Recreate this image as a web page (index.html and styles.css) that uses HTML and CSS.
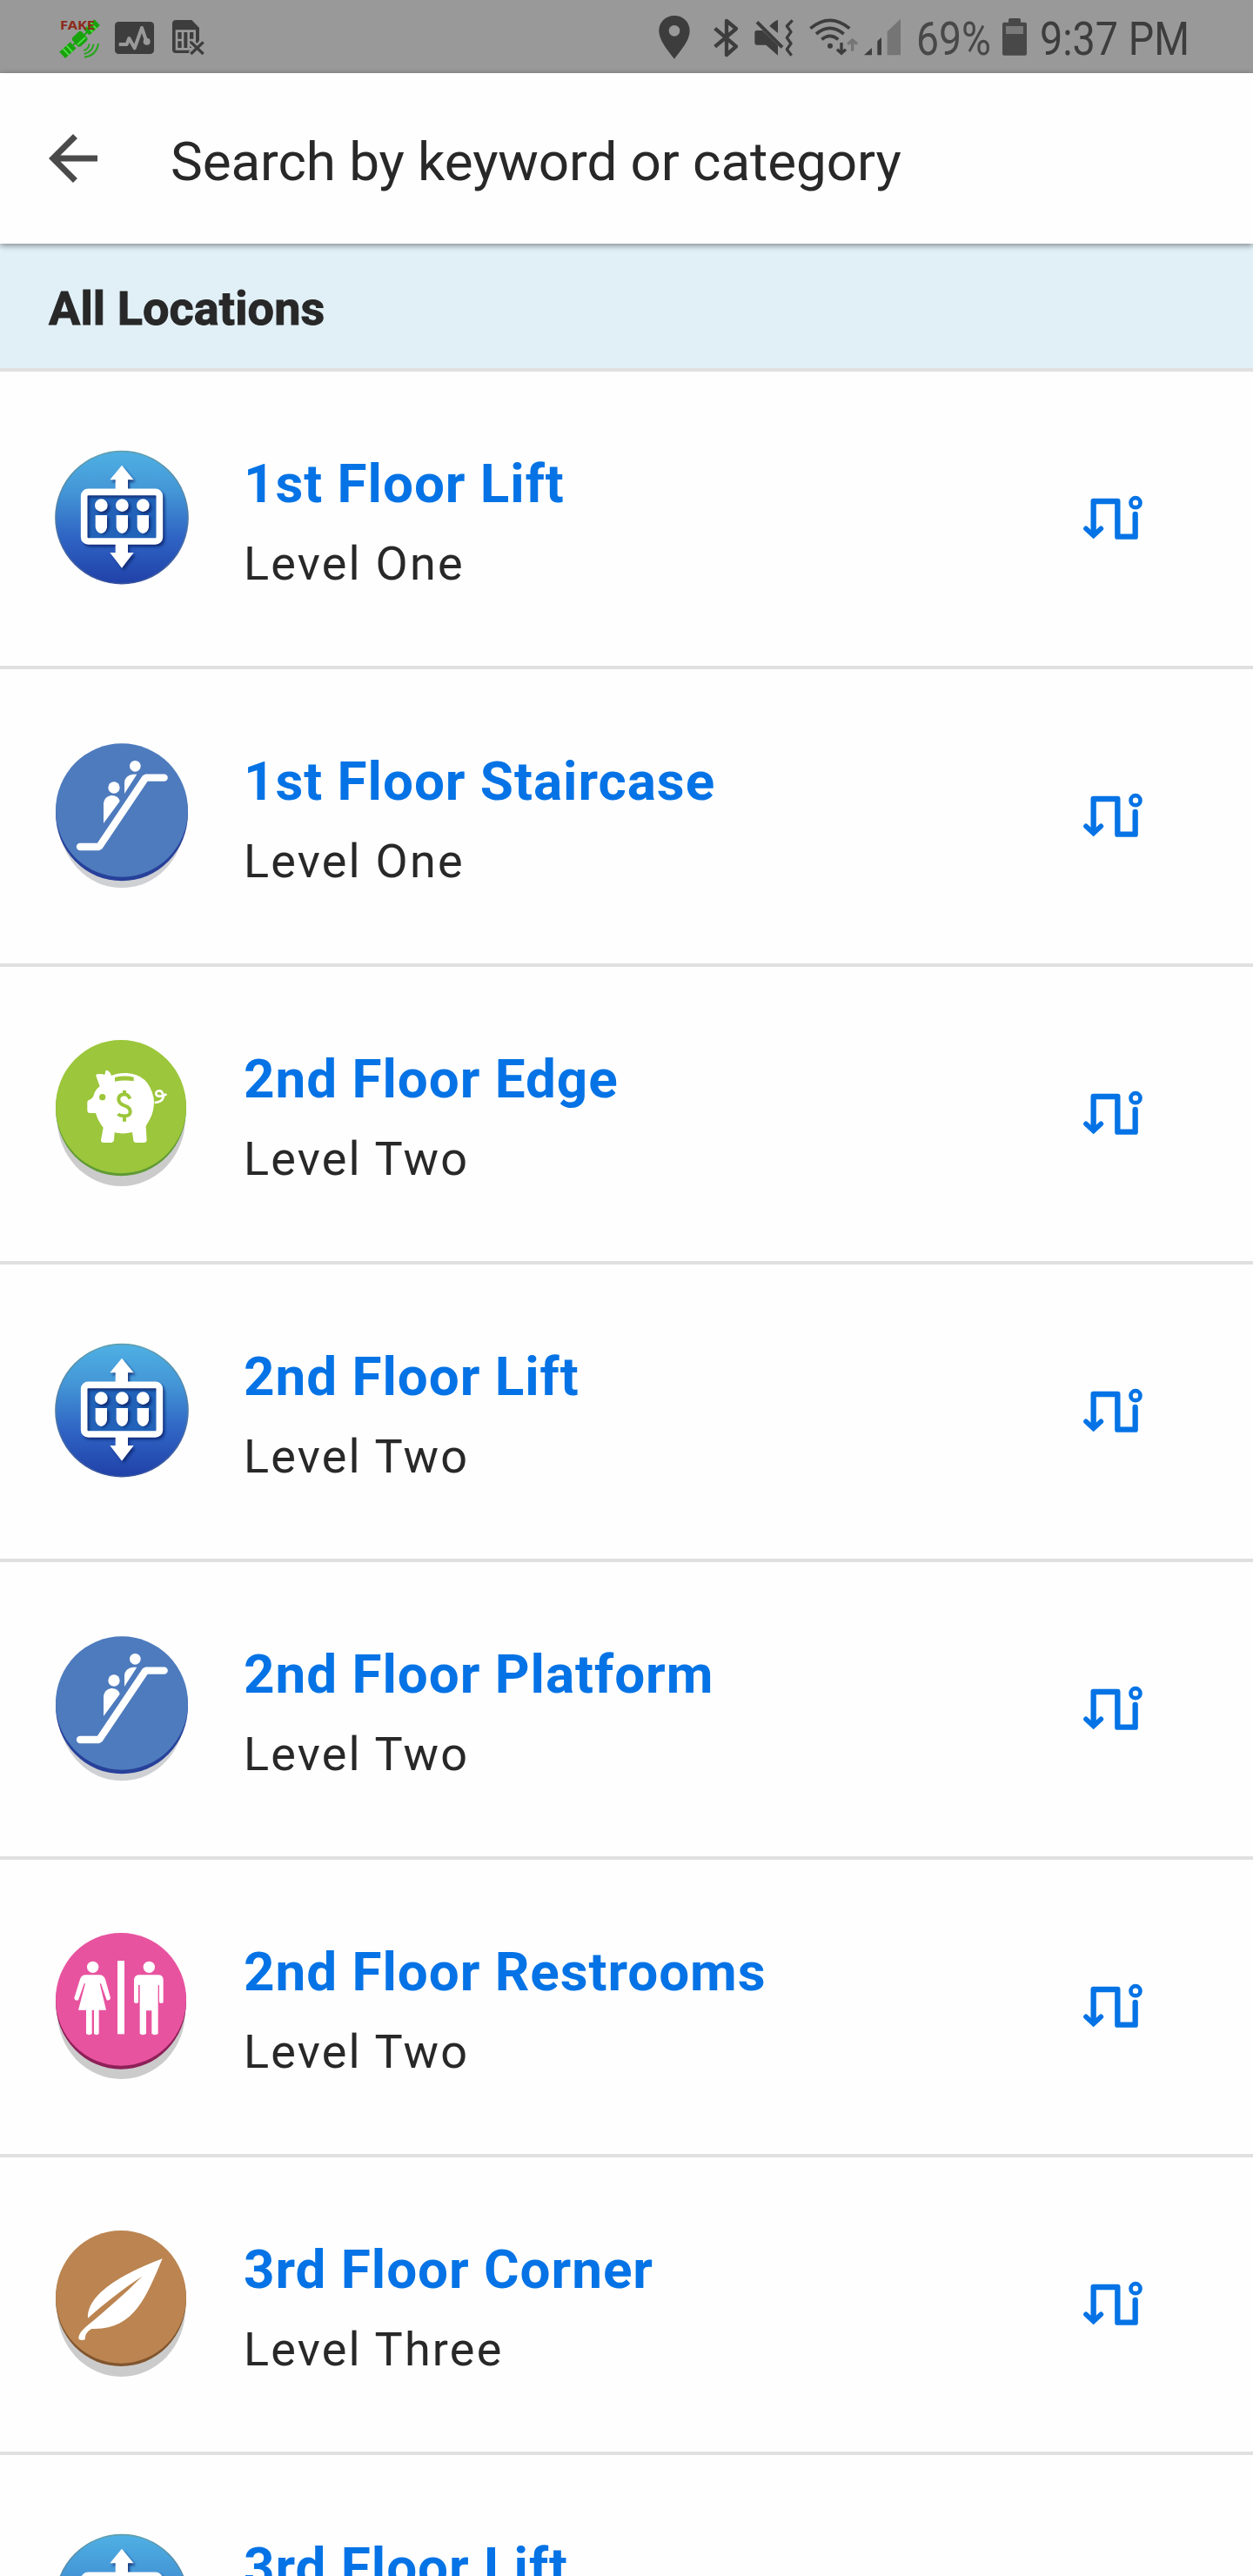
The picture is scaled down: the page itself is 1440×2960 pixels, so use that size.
FILE: index.html
```html
<!DOCTYPE html>
<html lang="en">
<head>
<meta charset="utf-8">
<title>All Locations</title>
<link rel="stylesheet" href="styles.css">
</head>
<body>
<svg class="defs" width="0" height="0" aria-hidden="true">
  <defs>
    <linearGradient id="liftFill" x1="0" y1="0" x2="0" y2="1">
      <stop offset="0" stop-color="#4fb0e4"/>
      <stop offset=".3" stop-color="#4496d6"/>
      <stop offset=".65" stop-color="#2f64c4"/>
      <stop offset="1" stop-color="#2041a8"/>
    </linearGradient>
    <linearGradient id="liftRim" x1="0" y1="0" x2="0" y2="1">
      <stop offset="0" stop-color="#5f9fae"/>
      <stop offset="1" stop-color="#3a55a0"/>
    </linearGradient>
    <filter id="soft" x="-20%" y="-20%" width="140%" height="140%"><feGaussianBlur stdDeviation="4"/></filter>
  </defs>
  <symbol id="lift" viewBox="48 66 504 504">
    <circle cx="300" cy="314" r="228" fill="url(#liftFill)" stroke="url(#liftRim)" stroke-width="5"/>
    <rect x="178" y="234" width="244" height="154" fill="#2263b9"/>
    <g transform="translate(7 8)" fill="#0d2870" stroke="none" opacity=".85" filter="url(#soft)">
      <path d="M300 136l40 47h-20v35h-42v-35h-20zM278 404h42v32h20l-40 52-40-52h18z"/>
      <rect x="170" y="226" width="260" height="170" rx="14" fill="none" stroke="#0d2870" stroke-width="22"/>
      <circle cx="229" cy="272" r="23"/><circle cx="301" cy="272" r="23"/><circle cx="373" cy="272" r="23"/>
      <path d="M209 305h40v42l-20 20-20-20zM281 305h40v42l-20 20-20-20zM353 305h40v42l-20 20-20-20z"/>
    </g>
    <path d="M300 134l41 50h-20v36h-43v-36h-19zM278 402h43v33h20l-41 53-41-53h19z" fill="#fff"/>
    <rect x="170" y="226" width="260" height="170" rx="14" fill="none" stroke="#fff" stroke-width="23"/>
    <g fill="#fff">
      <circle cx="229" cy="272" r="22"/><circle cx="301" cy="272" r="22"/><circle cx="373" cy="272" r="22"/>
      <path d="M209 306h40v42q-4 18-20 21q-16-3-20-21zM281 306h40v42q-4 18-20 21q-16-3-20-21zM353 306h40v42q-4 18-20 21q-16-3-20-21z"/>
    </g>
  </symbol>
  <symbol id="stairs" viewBox="48 42 504 504">
    <ellipse cx="300" cy="308" rx="217" ry="233" fill="#cfd0d3"/>
    <ellipse cx="300" cy="284" rx="228" ry="233" fill="#27419a"/>
    <ellipse cx="300" cy="273" rx="228" ry="230" fill="#4e7bbd"/>
    <path d="M156 399h66L382 161h64" fill="none" stroke="#fff" stroke-width="25" stroke-linecap="round" stroke-linejoin="bevel"/>
    <circle cx="346" cy="121" r="19" fill="#fff"/>
    <circle cx="273" cy="195" r="20" fill="#fff"/>
    <path d="M309 216v-38q2-26 30-29h13zM237 318v-70q4-23 26-26q25-1 30 20z" fill="#fff"/>
  </symbol>
  <symbol id="piggy" viewBox="48 48 504 504">
    <ellipse cx="298" cy="315" rx="221" ry="234" fill="#cbcbcb"/>
    <ellipse cx="297" cy="282" rx="225" ry="232" fill="#5f9a35"/>
    <ellipse cx="297" cy="275" rx="225" ry="230" fill="#9cc63b"/>
    <path d="M248 149q12 4 16 19q22-10 52-9q76 3 94 86q5 48-22 88l-5 9 3 48q-1 9-9 9h-28q-8 0-9-8l-4-28q-31 8-61 1l-2 27q-2 8-9 8h-27q-9 0-9-8l8-44q-18-22-26-50h-22q-7-1-7-9v-29q0-6 7-8q10-3 15-15q4-18 21-31l-13-36q-1-5 4-6q14-3 26 2l3-12q0-4 4-4z" fill="#fff"/>
    <path d="M413 261q31-2 30-25q-4-20-19-15q-13 8 0 17q19 3 30-7" fill="none" stroke="#fff" stroke-width="8"/>
    <circle cx="233" cy="242" r="11" fill="#9cc63b"/>
    <path d="M276 174q34-8 65-1v14q-32-6-65 1z" fill="#9cc63b"/>
    <path d="M328 248q-6-16-20-16q-20 2-19 19q1 13 20 20q21 7 20 23q-1 12-18 13q-18 0-24-7M309 219v15M309 307v19" fill="none" stroke="#9cc63b" stroke-width="12"/>
  </symbol>
  <symbol id="restroom" viewBox="48 36 504 504">
    <ellipse cx="298" cy="303" rx="221" ry="234" fill="#cbcbcb"/>
    <ellipse cx="297" cy="271" rx="225" ry="232" fill="#8d2058"/>
    <ellipse cx="297" cy="262" rx="225" ry="229" fill="#e8539f"/>
    <g fill="#fff">
      <rect x="285" y="129" width="24" height="253"/>
      <circle cx="200" cy="151" r="20"/><circle cx="394" cy="151" r="20"/>
      <path d="M175 178h48q14 0 20 15l18 64q-2 10-13 8l-20-57h-4l22 91h-25v82q-8 7-17 0v-82h-7v82q-10 7-20 0v-82h-27l24-91h-4l-20 57q-12 3-14-8l20-64q5-15 19-15z"/>
      <path d="M358 178h70q15 2 15 17v77q-7 7-14 0v-59h-4v168q-11 7-22 0v-80h-19v80q-11 7-22 0V213h-5v59q-7 7-15 0v-77q1-15 16-17z"/>
    </g>
  </symbol>
  <symbol id="feather" viewBox="48 42 504 504">
    <ellipse cx="298" cy="309" rx="221" ry="234" fill="#cbcbcb"/>
    <ellipse cx="297" cy="276" rx="225" ry="231" fill="#80552e"/>
    <ellipse cx="297" cy="268" rx="225" ry="229" fill="#bb8450"/>
    <path d="M440 136C340 174 180 246 183 341C240 291 300 242 370 197C310 258 240 318 182 366C160 385 148 400 152 414Q162 419 173 415Q172 390 196 378C340 384 384 270 440 136z" fill="#fff"/>
  </symbol>
  <symbol id="route" viewBox="72 60 213 156">
    <g fill="none" stroke="#0573e5" stroke-width="19" stroke-linecap="round" stroke-linejoin="round">
      <path d="M110 192V78h83v122h61v-77"/>
      <path d="M84 172l26 24 26-24" stroke-width="17" stroke-linejoin="miter"/>
      <circle cx="255" cy="83" r="16.500" stroke-width="14"/>
    </g>
  </symbol>
</svg>

<div class="statusbar">
  <div class="notifications">
    <svg class="ic-sat" viewBox="78 0 150 252">
      <g transform="translate(155 133) rotate(-43)" fill="#18a30d">
        <rect x="-83" y="-14" width="51" height="30"/>
        <rect x="-23" y="-20" width="44" height="42" rx="10"/>
        <rect x="32" y="-14" width="50" height="28"/>
        <path d="M-32-2h70v6h-70z"/>
        <path d="M-66-14v30M-50-14v30M48-14v28M65-14v28" stroke="#53e34b" stroke-width="5"/>
        <path d="M-19 10h36" stroke="#53e34b" stroke-width="5"/>
      </g>
      <path d="M169 174q16-5 19-23M170 186q28-6 33-34M171 197q42-6 48-47" fill="none" stroke="#26a61b" stroke-width="6"/>
      <text class="fake" x="87" y="103" textLength="120" lengthAdjust="spacingAndGlyphs">FAKE</text>
    </svg>
    <svg class="ic-monitor" viewBox="273 0 141 252">
      <rect x="276" y="75" width="135" height="111" rx="13" fill="#3d3d3d"/>
      <path d="M290 153h27l8-21 19 34 25-70 16 47" fill="none" stroke="#999" stroke-width="12" stroke-linejoin="round"/>
      <circle cx="386" cy="143" r="12" fill="#999"/>
    </svg>
    <svg class="ic-sim" viewBox="471 0 117 252">
      <path d="M487 69h54l26 27v42l-19 44-4 1h-57q-13 0-13-13V82q0-13 13-13z" fill="#3d3d3d"/>
      <path d="M489 107h62v62h-62zM510 107v62M530 107v62M489 138h21M530 138h21" fill="none" stroke="#999" stroke-width="8"/>
      <path d="M538 145l43 43M581 145l-43 43" stroke="#999" stroke-width="24"/>
      <path d="M538 145l43 41M581 145l-43 41" stroke="#3d3d3d" stroke-width="10"/>
    </svg>
  </div>
  <div class="system">
    <svg class="ic-pin" viewBox="51 0 114 252">
      <path fill-rule="evenodd" d="M108 54c31 0 53 23 53 52c0 35-32 69-53 97c-21-28-53-62-53-97c0-29 22-52 53-52zm0 33a19 19 0 1 0 0 38a19 19 0 1 0 0-38z" fill="#3d3d3d"/>
    </svg>
    <svg class="ic-bt" viewBox="240 0 90 252">
      <path d="M248 98l73 62-33 29V72l33 27-73 62" fill="none" stroke="#3d3d3d" stroke-width="13" stroke-linejoin="round"/>
    </svg>
    <svg class="ic-mute" viewBox="381 0 141 252">
      <path d="M392 105h20l53 52v34l-41-36h-32q-7 0-7-7v-36q0-7 7-7zM465 68v46l-29-24q10-14 29-22z" fill="#3d3d3d"/>
      <path d="M397 72l87 87" stroke="#999" stroke-width="10"/>
      <path d="M393 76l87 87" stroke="#3d3d3d" stroke-width="12"/>
      <path d="M515 70l-19 20 14 20-14 20 14 20-14 20 16 21" fill="none" stroke="#3d3d3d" stroke-width="10" stroke-linejoin="round"/>
    </svg>
    <svg class="ic-wifi" viewBox="570 0 174 252">
      <g fill="none" stroke="#3d3d3d" stroke-width="11">
        <path d="M577 98q67-56 135 0M597 117q47-40 95 0M616 136q28-24 57 0"/>
        <path d="M684 147v38M669 170l15 14 15-14" stroke-width="10"/>
        <path d="M722 176v-38M706 152l16-14 16 14" stroke="#757575" stroke-width="10"/>
      </g>
      <circle cx="645" cy="158" r="9" fill="#3d3d3d"/>
    </svg>
    <svg class="ic-signal" viewBox="759 0 132 252">
      <path d="M762 190l27-25v25zM808 142l14-13v61h-14z" fill="#3d3d3d"/>
      <path d="M842 109l46-44v125h-46z" fill="#757575"/>
    </svg>
    <svg class="tx-battery" viewBox="0 0 92 84"><text x="2" y="63" textLength="86" lengthAdjust="spacingAndGlyphs">69%</text></svg>
    <svg class="ic-battery" viewBox="336 0 90 252">
      <path d="M366 63h31q5 0 5 5v9h15q6 0 6 6v102q0 6-6 6h-72q-6 0-6-6V83q0-6 6-6h15v-9q0-5 6-5z" fill="#484848"/>
      <rect x="351" y="90" width="60" height="27" fill="#7a7a7a"/>
    </svg>
    <svg class="tx-time" viewBox="0 0 180 84"><text x="2" y="63" textLength="172" lengthAdjust="spacingAndGlyphs">9:37 PM</text></svg>
  </div>
</div>

<header class="searchbar">
  <svg class="back" viewBox="0 0 24 24"><path d="M20 11H7.830l5.590-5.590L12 4l-8 8 8 8 1.410-1.410L7.830 13H20v-2z" fill="#4a4a4a"/></svg>
  <div class="search-text">Search by keyword or category</div>
</header>

<h2 class="section">All Locations</h2>

<ul class="list">
  <li class="row"><svg class="badge"><use href="#lift"/></svg><div class="info"><div class="name">1st Floor Lift</div><div class="level">Level One</div></div><svg class="route"><use href="#route"/></svg></li>
  <li class="row"><svg class="badge"><use href="#stairs"/></svg><div class="info"><div class="name">1st Floor Staircase</div><div class="level">Level One</div></div><svg class="route"><use href="#route"/></svg></li>
  <li class="row"><svg class="badge"><use href="#piggy"/></svg><div class="info"><div class="name">2nd Floor Edge</div><div class="level">Level Two</div></div><svg class="route"><use href="#route"/></svg></li>
  <li class="row"><svg class="badge"><use href="#lift"/></svg><div class="info"><div class="name">2nd Floor Lift</div><div class="level">Level Two</div></div><svg class="route"><use href="#route"/></svg></li>
  <li class="row"><svg class="badge"><use href="#stairs"/></svg><div class="info"><div class="name">2nd Floor Platform</div><div class="level">Level Two</div></div><svg class="route"><use href="#route"/></svg></li>
  <li class="row"><svg class="badge"><use href="#restroom"/></svg><div class="info"><div class="name">2nd Floor Restrooms</div><div class="level">Level Two</div></div><svg class="route"><use href="#route"/></svg></li>
  <li class="row"><svg class="badge"><use href="#feather"/></svg><div class="info"><div class="name">3rd Floor Corner</div><div class="level">Level Three</div></div><svg class="route"><use href="#route"/></svg></li>
  <li class="row"><svg class="badge"><use href="#lift"/></svg><div class="info"><div class="name">3rd Floor Lift</div></div><svg class="route"><use href="#route"/></svg></li>
</ul>
</body>
</html>
```
FILE: styles.css
```css
* { box-sizing: border-box; }

html, body {
  margin: 0;
  height: 2960px;
  overflow: hidden;
}

body {
  background: #fefefe;
  color: #282828;
  font-family: Roboto, "Liberation Sans", sans-serif;
}

svg { display: block; flex: none; overflow: visible; }
symbol { overflow: visible; }
.defs { position: absolute; }

/* Status bar */
.statusbar {
  display: flex;
  justify-content: space-between;
  height: 84px;
  padding: 0 67px 0 66px;
  background: #999;
}
.statusbar svg { height: 84px; }
.statusbar text { font-size: 53px; fill: #3d3d3d; }
.notifications, .system { display: flex; }
.ic-sat { width: 50px; }
.ic-monitor { width: 47px; margin-left: 15px; }
.ic-sim { width: 39px; margin-left: 19px; }
.ic-pin { width: 38px; }
.ic-bt { width: 30px; margin-left: 25px; }
.ic-mute { width: 47px; margin-left: 17px; }
.ic-wifi { width: 58px; margin-left: 16px; }
.ic-signal { width: 44px; margin-left: 5px; }
.tx-battery { width: 92px; margin-left: 15px; }
.ic-battery { width: 30px; margin-left: 8px; }
.tx-time { width: 180px; margin-left: 12px; }
.statusbar .tx-battery text { fill: #484848; }
.statusbar .fake {
  fill: #8d2a19;
  font: 700 45px "Noto Sans", sans-serif;
}

/* Search header */
.searchbar {
  position: relative;
  z-index: 1;
  display: flex;
  align-items: center;
  gap: 70px;
  height: 196px;
  padding-left: 42px;
  background: #fefefe;
  box-shadow: 0 2px 7px rgba(0, 0, 0, .45);
}
.back { width: 84px; height: 84px; }
.search-text {
  padding-top: 7px;
  font-size: 62px;
  letter-spacing: -.1px;
  line-height: 76px;
  white-space: nowrap;
}

/* Section title */
.section {
  height: 147px;
  margin: 0;
  padding: 1px 0 0 56px;
  border-bottom: 4px solid #e0e0e0;
  background: #e1f0f7;
  font-size: 54px;
  font-weight: 700;
  letter-spacing: .1px;
  line-height: 147px;
  -webkit-text-stroke: 1px #282828;
}

/* Location rows */
.list {
  height: 2533px;
  margin: 0;
  padding: 0;
  overflow: hidden;
  list-style: none;
}
.row {
  display: flex;
  align-items: center;
  height: 342px;
  padding: 0 125px 0 56px;
  border-bottom: 4px solid #e0e0e0;
}
.badge { width: 168px; height: 168px; }
.info {
  flex: 1;
  height: 192px;
  padding: 12px 0 0 56px;
  white-space: nowrap;
}
.name {
  color: #0573e5;
  font-size: 62px;
  font-weight: 700;
  letter-spacing: .95px;
  line-height: 88px;
}
.level {
  margin-top: 4px;
  font-size: 54px;
  letter-spacing: 2.2px;
  line-height: 88px;
}
.route { width: 71px; height: 52px; }
```
